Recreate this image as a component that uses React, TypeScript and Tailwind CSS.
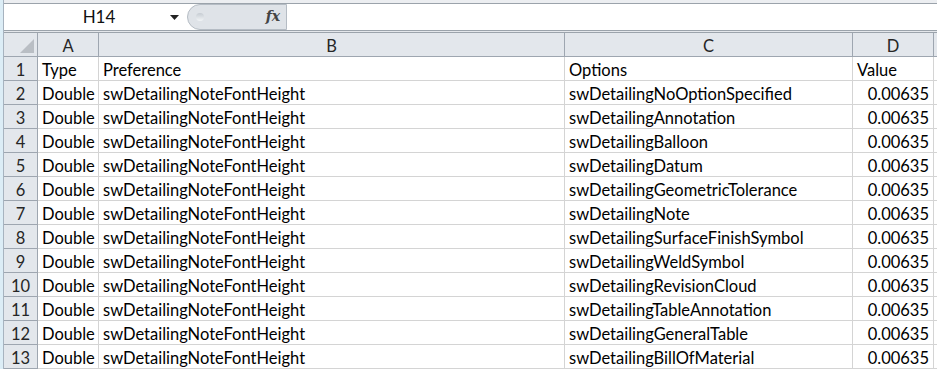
import React from "react";

const options = [
  "swDetailingNoOptionSpecified",
  "swDetailingAnnotation",
  "swDetailingBalloon",
  "swDetailingDatum",
  "swDetailingGeometricTolerance",
  "swDetailingNote",
  "swDetailingSurfaceFinishSymbol",
  "swDetailingWeldSymbol",
  "swDetailingRevisionCloud",
  "swDetailingTableAnnotation",
  "swDetailingGeneralTable",
  "swDetailingBillOfMaterial",
];

const cols = "grid grid-cols-[34px_61px_466px_288px_81px_1fr]";
const cell = "h-[24px] border-r border-b border-[#d4d4d4] bg-white px-[4px] pt-[2px] leading-[23px] whitespace-nowrap overflow-hidden text-[#000]";
const head = "h-[24px] border-r border-b border-[#9ea6b0] bg-[#e3e7ec] pt-[2px] text-center leading-[23px] text-[#262626]";

export default function App() {
  return (
    <div className="flex h-[369px] w-[937px] overflow-hidden bg-[#dcedf6] font-['Lato','Open_Sans',sans-serif] text-[16.5px]">
      <div className="w-[4px] shrink-0 border-r border-[#a7b3bf]" />
      <div className="flex min-w-0 flex-1 flex-col bg-[#e4e7eb]">
        {/* ribbon edge */}
        <div className="h-[5px] border-b border-[#9ba3ab] bg-[#eceef1]" />

        {/* name box + formula bar */}
        <div className="flex h-[27px] border-b border-[#9ba3ab] bg-white">
          <div className="flex w-[183px] items-center pt-[1px]">
            <span className="flex-1 pl-[24px] text-center text-[17px] text-[#111]">H14</span>
            <svg width="9" height="5" viewBox="0 0 9 5" className="mr-[8px]">
              <path d="M0 0h9L4.5 5z" fill="#222" />
            </svg>
          </div>
          <div className="relative flex w-[100px] items-center rounded-l-full border border-[#b5bcc4] bg-[#dfe3e8]">
            <div className="ml-[8px] h-[8px] w-[8px] rounded-full bg-gradient-to-b from-[#c6ccd3] to-[#f2f5f7]" />
            <span className="ml-auto mr-[6px] font-['DejaVu_Serif',serif] text-[14px] italic font-bold text-[#444]">fx</span>
          </div>
          <div className="flex-1 bg-white" />
        </div>

        <div className="h-[3px] border-b border-[#9ba3ab] bg-[#e4e7eb]" />

        {/* sheet grid */}
        <div className={cols}>
          <div className={head + " relative"}>
            <svg width="14" height="14" viewBox="0 0 14 14" className="absolute bottom-[3px] right-[3px]">
              <path d="M14 0V14H0z" fill="#b9bec4" />
            </svg>
          </div>
          <div className={head}>A</div>
          <div className={head}>B</div>
          <div className={head}>C</div>
          <div className={head}>D</div>
          <div className={head} />

          <div className={head}>1</div>
          <div className={cell}>Type</div>
          <div className={cell}>Preference</div>
          <div className={cell}>Options</div>
          <div className={cell}>Value</div>
          <div className={cell} />

          {options.map((opt, i) => (
            <React.Fragment key={opt}>
              <div className={head}>{i + 2}</div>
              <div className={cell}>Double</div>
              <div className={cell}>swDetailingNoteFontHeight</div>
              <div className={cell}>{opt}</div>
              <div className={cell + " text-right"}>0.00635</div>
              <div className={cell} />
            </React.Fragment>
          ))}
        </div>
      </div>
    </div>
  );
}
